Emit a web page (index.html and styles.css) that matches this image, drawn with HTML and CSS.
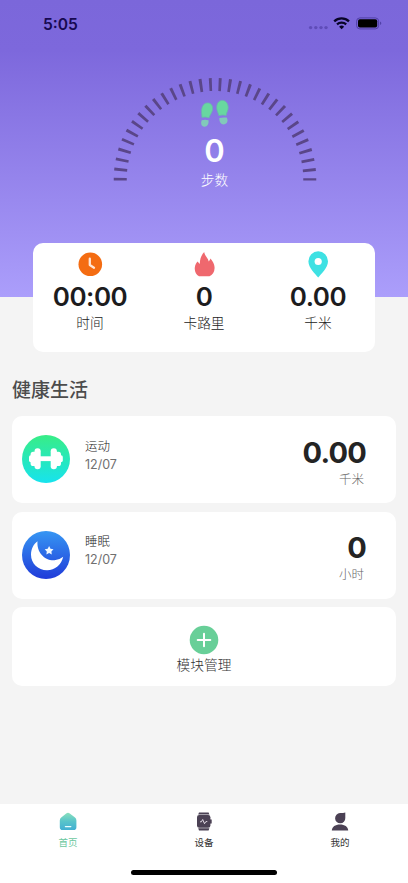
FILE: index.html
```html
<!DOCTYPE html>
<html lang="zh-CN">
<head>
<meta charset="utf-8">
<meta name="viewport" content="width=device-width, initial-scale=1">
<title>首页</title>
<link rel="stylesheet" href="styles.css">
</head>
<body>
<div class="app">
  <header class="hero">
    <div class="status">
      <span class="clock">5:05</span>
      <svg class="status-icons" width="76" height="18" viewBox="0 0 76 18">
        <g fill="#5f4cb8"><circle cx="2.6" cy="12.6" r="1.7"/><circle cx="7.8" cy="12.6" r="1.7"/><circle cx="13" cy="12.6" r="1.7"/><circle cx="18" cy="12.6" r="1.7"/></g>
        <g fill="none" stroke="#080426" stroke-width="2.3"><path d="M26.2 6.3a11 11 0 0 1 14.8 0"/><path d="M29 9.4a6.9 6.9 0 0 1 9.2 0"/></g>
        <path d="M33.6 14.3l-2.5-2.6a3.6 3.6 0 0 1 5 0z" fill="#080426"/>
        <rect x="48.6" y="2.9" width="22" height="11" rx="3.3" fill="none" stroke="#5140a8"/>
        <rect x="50" y="4.3" width="19.2" height="8.2" rx="1.9" fill="#000"/>
        <path d="M72 6.6c1.8.5 1.8 3 0 3.5z" fill="#5140a8"/>
      </svg>
    </div>
    <div class="gauge">
      <svg class="dial" width="206" height="106" viewBox="0 0 206 106">
        <path d="M8.25 103.6V102.2A94.75 94.75 0 0 1 197.75 102.2V103.6" fill="none" stroke="#5a4689" stroke-width="13" stroke-dasharray="2.8 6.802"/>
      </svg>
      <div class="steps">
        <svg width="30" height="30" viewBox="0 0 30 30">
          <g fill="#68d7a0" stroke="#69b5ad" stroke-width=".8">
            <path d="M2 18.4C1.8 14.5 1 12.8 1.9 9.2C2.8 5.3 5.5 3.4 8.5 4C12 4.5 13.2 8 12.4 11.5C11.7 14.5 9.7 16 9 18.9Q5 17.5 2 18.4z"/>
            <path d="M18.8 16.6C18.4 13.6 16.8 12.4 16.7 8.9C16.6 4.6 18.6 1.6 22 1.4C25.8 1.2 28 4.3 28.2 8.3C28.4 11.5 26.4 13.4 26.2 16.4Q22 15.5 18.8 16.6z"/>
          </g>
          <g fill="#82c9ba"><path d="M1.7 21.3Q5 20 8.5 21.3C9 25 7.4 27.8 4.4 27.7C1.2 27.5.5 24.5 1.7 21.3z"/><path d="M19.4 19Q22.8 18 26.7 18.6C28.6 22 27 25.1 24 25.4C20.8 25.6 19 22.5 19.4 19z"/></g>
        </svg>
        <strong>0</strong>
        <span>步数</span>
      </div>
    </div>
  </header>

  <section class="stats">
    <div class="stat">
      <svg width="28" height="28" viewBox="0 0 28 28"><circle cx="14.3" cy="14.3" r="11.8" fill="#f46c12"/><path d="M13.8 8.7v6.4l4.2 2.6" fill="none" stroke="#ffe5d6" stroke-width="2.3" stroke-linecap="round" stroke-linejoin="round"/></svg>
      <strong>00:00</strong><span>时间</span>
    </div>
    <div class="stat">
      <svg width="28" height="28" viewBox="0 0 28 28"><path d="M9 26.2C6 24.5 4.4 21.3 4.8 17.5C5.1 14.5 6.6 12.8 7.5 11.5L9.8 14C9.8 8.5 11.6 4.9 14.2 2.1C14.5 5.6 17.8 7.5 18.8 11.6L20.7 8.5C21.9 11 24.7 13.3 24.6 18C24.5 22.3 22.4 25.1 19.5 26.2z" fill="#ef686e"/></svg>
      <strong>0</strong><span>卡路里</span>
    </div>
    <div class="stat">
      <svg width="28" height="28" viewBox="0 0 28 28"><path d="M14.2 27.6C11.7 24 4.4 18 4.4 11.2A9.8 10 0 0 1 24 11.2C24 18 16.7 24 14.2 27.6z" fill="#3ee1e3"/><circle cx="14.2" cy="11.5" r="3.6" fill="#fff"/></svg>
      <strong>0.00</strong><span>千米</span>
    </div>
  </section>

  <main class="content">
    <h1>健康生活</h1>
    <article class="card">
      <svg width="48" height="48" viewBox="0 0 48 48">
        <defs><linearGradient id="sport" x2="0" y2="1"><stop stop-color="#38ed86"/><stop offset="1" stop-color="#17e3ee"/></linearGradient></defs>
        <circle cx="24" cy="24" r="24" fill="url(#sport)"/>
        <g fill="#fff"><rect x="17" y="21.3" width="14" height="4.8"/><rect x="12.5" y="13.3" width="6.2" height="21" rx="3"/><rect x="28.7" y="13.3" width="6.2" height="21" rx="3"/><rect x="8.6" y="16.8" width="6" height="14.2" rx="2.6"/><rect x="33" y="16.8" width="6" height="14.2" rx="2.6"/><rect x="7" y="20.3" width="4" height="7" rx="1.8"/><rect x="36.8" y="20.3" width="4" height="7" rx="1.8"/></g>
      </svg>
      <div class="label"><b>运动</b><time>12/07</time></div>
      <div class="value"><strong>0.00</strong><span>千米</span></div>
    </article>
    <article class="card">
      <svg width="48" height="48" viewBox="0 0 48 48">
        <defs><linearGradient id="sleep" x2="0" y2="1"><stop stop-color="#3696f3"/><stop offset="1" stop-color="#203bd9"/></linearGradient></defs>
        <circle cx="24" cy="24" r="24" fill="url(#sleep)"/>
        <path d="M15.5 10.2C14.5 20.5 22 29.8 32.5 29.3Q37.3 29.2 41.2 25.8C39.5 33.8 32.8 39.3 25 39.2C16 39.1 9 32.5 9 23.7C9 18 11.5 13.2 15.5 10.2z" fill="#fff"/>
        <path d="M27.1 15l1.4 2.7 3 .5-2.1 2.2.4 3-2.7-1.3-2.7 1.3.4-3-2.1-2.2 3-.5z" fill="#f0f8ff"/>
      </svg>
      <div class="label"><b>睡眠</b><time>12/07</time></div>
      <div class="value"><strong>0</strong><span>小时</span></div>
    </article>
    <article class="card manage">
      <svg width="30" height="30" viewBox="0 0 30 30"><circle cx="15" cy="15" r="14.3" fill="#68cf98"/><path d="M15 8.7v12.6M8.7 15h12.6" stroke="#fff" stroke-width="2" stroke-linecap="round"/></svg>
      <span>模块管理</span>
    </article>
  </main>

  <footer class="footer">
    <nav class="tabs">
      <a class="tab active">
        <svg width="22" height="22" viewBox="0 0 22 22"><defs><linearGradient id="home" x2="0" y2="1"><stop stop-color="#8be0bd"/><stop offset=".5" stop-color="#58c4ca"/><stop offset="1" stop-color="#42afd3"/></linearGradient></defs><path d="M9.2 2.4Q11 1.1 12.8 2.4L18 6.4Q19.4 7.5 19.4 9.5V16.3Q19.4 19.1 16.6 19.1H5.6Q2.8 19.1 2.8 16.3V9.5Q2.8 7.5 4.2 6.4z" fill="url(#home)"/><path d="M8.4 15.6h5.4" stroke="#e9ffff" stroke-width="1.3" stroke-linecap="round"/></svg>
        <span>首页</span>
      </a>
      <a class="tab">
        <svg width="22" height="22" viewBox="0 0 22 22"><g fill="#4b4154"><path d="M6 1.5h9.6l.8 2H5.2zM5.2 17.3h11.2l-.8 2.2H6z"/><rect x="4" y="4" width="13.4" height="12.8" rx="2.2"/><rect x="17" y="8.2" width="1.7" height="4.5" rx=".8"/></g><path d="M7 10.8h1.4l1.3-2.3 1.8 4.2 1.4-2.1h1.4" fill="none" stroke="#eee6f0" stroke-width=".9" stroke-linejoin="round"/></svg>
        <span>设备</span>
      </a>
      <a class="tab">
        <svg width="22" height="22" viewBox="0 0 22 22"><g fill="#4b4154"><path d="M16.3 1.5V7A5.1 5.1 0 1 1 11 2.1Q13.8 2.2 16.3 1.5z"/><path d="M2.8 19.4C3 15.6 6.3 13.4 11 13.4S19 15.6 19.2 19.4z"/></g></svg>
        <span>我的</span>
      </a>
    </nav>
    <div class="home-indicator"></div>
  </footer>
</div>
</body>
</html>
```

FILE: styles.css
```css
* { box-sizing: border-box; }
body {
  margin: 0;
  background: #f4f4f4;
  color: #1c1c1e;
  font-family: Inter, "Noto Sans CJK SC", sans-serif;
}
svg { display: block; flex: none; }
.app {
  display: flex;
  flex-direction: column;
  width: 408px;
  height: 883px;
  overflow: hidden;
}
.hero {
  height: 297px;
  flex: none;
  background: linear-gradient(#7b67da 0, #7d68dc 50px, #ab9efb 100%);
}
.status {
  display: flex;
  justify-content: space-between;
  height: 77px;
  padding: 15px 24px 0 43px;
}
.clock {
  font-size: 15.6px;
  font-weight: 600;
  line-height: 19px;
  color: #170951;
}
.gauge {
  display: grid;
  justify-content: center;
  padding-left: 21px;
}
.dial, .steps { grid-area: 1 / 1; }
.steps {
  display: flex;
  flex-direction: column;
  align-items: center;
  padding-top: 22px;
  color: #fff;
}
.steps strong {
  margin-top: 2px;
  font-size: 31px;
  font-weight: 600;
  line-height: 40px;
}
.steps span {
  font-size: 13.7px;
  font-weight: 300;
  line-height: 18px;
}
.stats {
  display: grid;
  grid-template-columns: repeat(3, 1fr);
  flex: none;
  height: 109px;
  margin: -54px 33px 0;
  padding-top: 7px;
  border-radius: 10px;
  background: #fff;
}
.stat {
  display: flex;
  flex-direction: column;
  align-items: center;
}
.stat strong {
  margin-top: 3px;
  font-size: 26px;
  font-weight: 600;
  line-height: 32px;
  letter-spacing: -0.5px;
}
.stat span {
  font-size: 13.7px;
  font-weight: 300;
  line-height: 20px;
  color: #222;
}
.content {
  display: flex;
  flex-direction: column;
  gap: 8.5px;
  flex: 1;
  padding: 26px 12px 0;
}
h1 {
  margin: 0 0 3.5px;
  font-size: 19px;
  font-weight: 500;
  line-height: 26px;
  color: #4c4c4c;
}
.card {
  display: flex;
  height: 87px;
  padding: 0 30px 0 10px;
  border-radius: 10px;
  background: #fff;
}
.card > svg { margin-top: 19.3px; }
.label {
  display: flex;
  flex-direction: column;
  flex: 1;
  padding: 21.6px 0 0 15px;
  font-size: 12.5px;
  line-height: 18px;
}
.label b { font-weight: 300; color: #222; }
.label time { color: #707070; }
.value { padding-top: 18.6px; text-align: right; }
.value strong {
  display: block;
  font-size: 29px;
  font-weight: 700;
  line-height: 36px;
  letter-spacing: -0.8px;
  color: #242424;
}
.value span {
  display: block;
  padding-right: 2px;
  font-size: 12.5px;
  font-weight: 300;
  line-height: 18px;
  color: #666;
}
.manage {
  flex-direction: column;
  align-items: center;
  height: 78.5px;
  padding: 0;
}
.card.manage > svg { margin-top: 18px; }
.manage span {
  font-size: 13.7px;
  font-weight: 300;
  line-height: 21px;
  color: #333;
}
.footer {
  display: flex;
  flex-direction: column;
  justify-content: space-between;
  align-items: center;
  flex: none;
  height: 79px;
  padding: 7px 0 8px;
  background: #fff;
}
.tabs {
  display: grid;
  grid-template-columns: repeat(3, 1fr);
  width: 100%;
}
.tab {
  display: flex;
  flex-direction: column;
  align-items: center;
  gap: 2px;
  font-size: 9.5px;
  line-height: 16px;
  color: #333;
}
.tab.active { color: #6cc8a0; }
.home-indicator {
  width: 146px;
  height: 5px;
  border-radius: 3px;
  background: #000;
}
```
